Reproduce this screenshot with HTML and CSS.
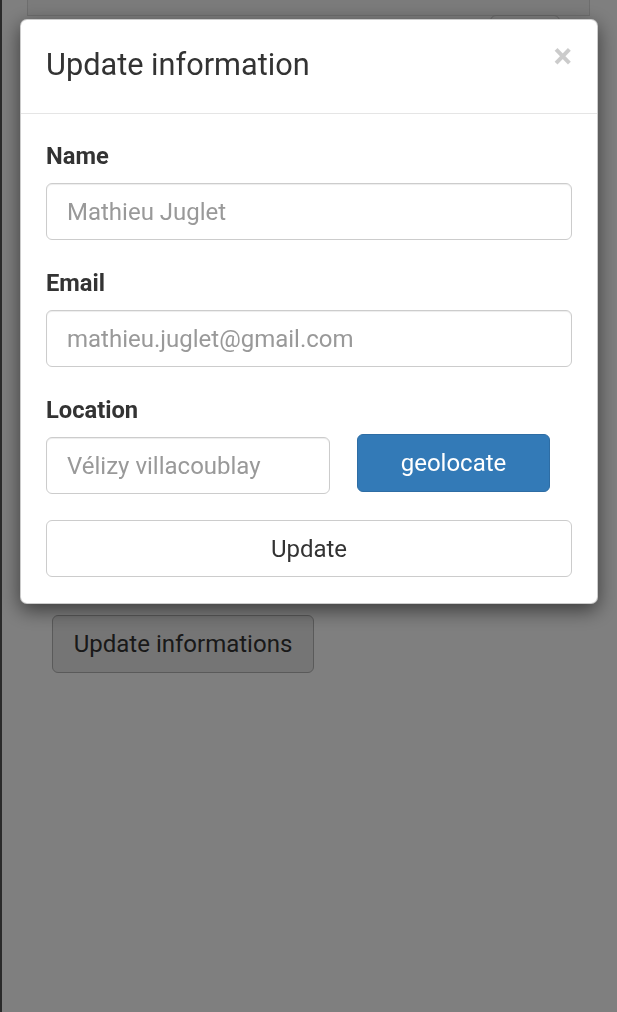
FILE: index.html
```html
<!DOCTYPE html>
<html lang="en">
<head>
<meta charset="utf-8">
<title>Update information</title>
<link rel="stylesheet" href="styles.css">
</head>
<body>
<div class="page">
  <div class="panel"></div>
  <div class="toolbar"><button class="tool-btn" type="button">&nbsp;</button></div>
  <button class="main-btn" type="button">Update informations</button>
</div>

<div class="backdrop"></div>
<div class="modal">
  <div class="dialog">
    <div class="modal-content">
      <div class="modal-header">
        <h4 class="modal-title">Update information</h4>
        <button class="close" type="button" aria-label="Close">&times;</button>
      </div>
      <div class="modal-body">
        <div class="group">
          <label class="label" for="name">Name</label>
          <input class="input" id="name" type="text" placeholder="Mathieu Juglet">
        </div>
        <div class="group">
          <label class="label" for="email">Email</label>
          <input class="input" id="email" type="email" placeholder="mathieu.juglet@gmail.com">
        </div>
        <div class="group">
          <label class="label" for="loc">Location</label>
          <div class="loc-row">
            <input class="input loc-input" id="loc" type="text" placeholder="Vélizy villacoublay">
            <button class="btn-primary" type="button">geolocate</button>
          </div>
        </div>
        <button class="btn-default" type="button">Update</button>
      </div>
    </div>
  </div>
</div>
</body>
</html>
```

FILE: styles.css
```css
* {
  box-sizing: border-box;
}

html, body {
  margin: 0;
  padding: 0;
}

body {
  font-family: Roboto, "Liberation Sans", Arial, sans-serif;
  font-size: 24px;
  color: #333;
  background: #fff;
  overflow: hidden;
}

.page {
  min-height: 100vh;
  border-left: 2px solid #555;
}

.panel {
  height: 16px;
  margin: 0 27px 0 25px;
  background: #f7f7f7;
  border: 1px solid #ddd;
  border-top: none;
}

.toolbar {
  display: flex;
  justify-content: flex-end;
  padding-right: 57px;
  margin-top: -1px;
}

.tool-btn {
  width: 70px;
  height: 40px;
  border: 1px solid #ccc;
  border-radius: 6px;
  background: #fff;
}

.main-btn {
  display: block;
  margin: 560px 0 0 50px;
  width: 262px;
  height: 58px;
  border: 1px solid #b4b4b4;
  border-radius: 6px;
  background: #ebebeb;
  color: #333;
  font-family: Roboto, "Liberation Sans", Arial, sans-serif;
  font-size: 24px;
  padding: 0;
}

.backdrop {
  position: fixed;
  inset: 0;
  background: rgba(0, 0, 0, 0.5);
}

.modal {
  position: fixed;
  inset: 0;
}

.dialog {
  margin: 19px 19px 0 20px;
}

.modal-content {
  background: #fff;
  border: 1px solid rgba(0, 0, 0, 0.2);
  border-radius: 7px;
  box-shadow: 0 6px 20px rgba(0, 0, 0, 0.55);
}

.modal-header {
  display: flex;
  justify-content: space-between;
  align-items: flex-start;
  padding: 24px 25px 27px 25px;
  border-bottom: 1px solid #e5e5e5;
}

.modal-title {
  margin: 0;
  font-size: 30.7px;
  font-weight: 400;
  line-height: 42px;
  color: #333;
}

.close {
  margin-top: -5px;
  padding: 0;
  border: 0;
  background: transparent;
  font-family: Roboto, "Liberation Sans", Arial, sans-serif;
  font-size: 35px;
  font-weight: 700;
  line-height: 35px;
  color: #000;
  opacity: 0.2;
}

.modal-body {
  padding: 27px 25px 26px 25px;
}

.group {
  margin-bottom: 28px;
}

.group:last-of-type {
  margin-bottom: 26px;
}

.label {
  display: block;
  font-weight: 700;
  font-size: 23.7px;
  line-height: 30px;
  margin-bottom: 12px;
  color: #333;
}

.input {
  display: block;
  width: 100%;
  height: 57px;
  padding: 0 20px;
  border: 1px solid #ccc;
  border-radius: 6px;
  font-family: Roboto, "Liberation Sans", Arial, sans-serif;
  font-size: 24px;
  color: #555;
  background: #fff;
  box-shadow: inset 0 1px 1px rgba(0, 0, 0, 0.075);
}

.input::placeholder {
  color: #999;
}

.loc-row {
  display: flex;
  align-items: flex-start;
}

.loc-input {
  width: 284px;
  flex: none;
}

.btn-primary {
  flex: none;
  width: 193px;
  height: 58px;
  margin: -3px 0 0 27px;
  padding: 0;
  border: 1px solid #2e6da4;
  border-radius: 6px;
  background: #337ab7;
  color: #fff;
  font-family: Roboto, "Liberation Sans", Arial, sans-serif;
  font-size: 24px;
}

.btn-default {
  display: block;
  width: 100%;
  height: 57px;
  padding: 0;
  border: 1px solid #ccc;
  border-radius: 6px;
  background: #fff;
  color: #333;
  font-family: Roboto, "Liberation Sans", Arial, sans-serif;
  font-size: 24px;
}
```
